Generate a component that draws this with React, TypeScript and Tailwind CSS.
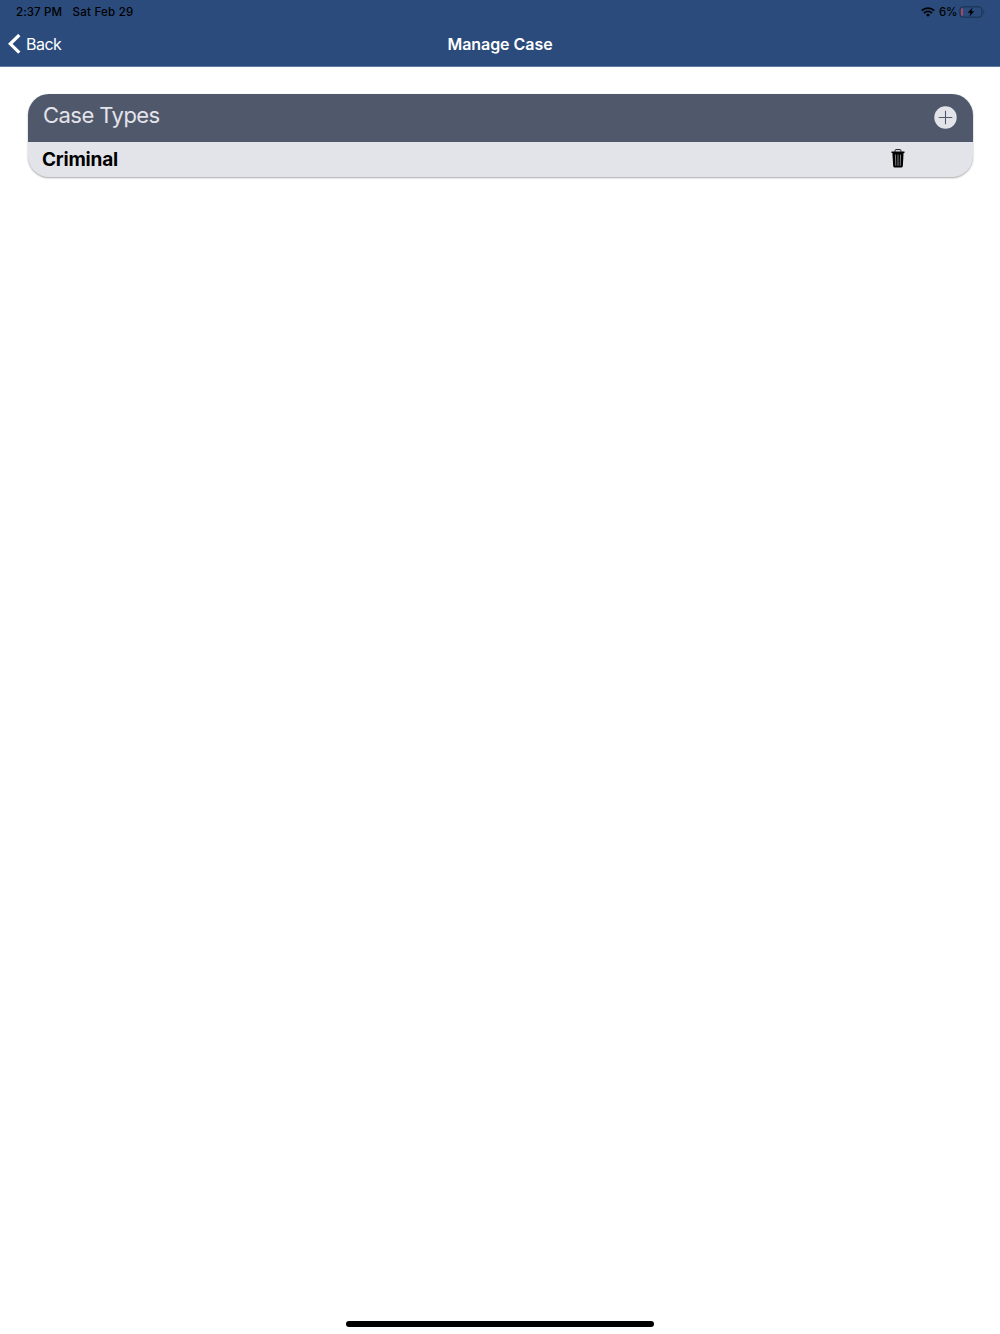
import React from "react";

const caseTypes = [{ id: 1, name: "Criminal" }];

const App: React.FC = () => {
  return (
    <div className="flex h-[1334px] w-[1000px] flex-col overflow-hidden bg-white font-['Inter',sans-serif]">
      <header className="h-[67px] border-b border-[#5f7ba3] bg-[#2a4b7c]">
        <StatusBar />
        <NavBar title="Manage Case" />
      </header>
      <main className="flex-1 px-[27.5px] pt-[27px]">
        <CaseTypes />
      </main>
      <div className="mx-auto mb-[7.5px] h-[5.5px] w-[308px] rounded-full bg-black" />
    </div>
  );
};

export default App;

const StatusBar = () => {
  return (
    <div className="flex h-6 items-center justify-between pl-4 pr-[15px] text-[11.5px] font-medium text-black">
      <div className="flex whitespace-pre pt-[2px]">
        <span className="w-[56.5px] tracking-[0.1px]">2:37 PM</span>
        <span className="tracking-[0.25px]">Sat Feb 29</span>
      </div>
      <div className="flex items-center">
        <WifiIcon />
        <span className="ml-[4px] w-[20px] pt-[2px] tracking-[-0.2px]">6%</span>
        <BatteryIcon />
      </div>
    </div>
  );
};

const NavBar = ({ title }: { title: string }) => {
  return (
    <div className="grid h-[42px] grid-cols-3 items-center text-white">
      <button className="flex items-center pb-[2px] pl-2 text-[16px] tracking-[-0.5px]">
        <svg className="mr-[5px] h-5 w-[13px]" viewBox="0 0 13 20" fill="none">
          <path d="M11.3 1 2.3 9.8l9 8.8" stroke="currentColor" strokeWidth="3.2" />
        </svg>
        Back
      </button>
      <h1 className="pb-[2px] text-center text-[16px] font-semibold tracking-[-0.05px]">{title}</h1>
    </div>
  );
};

const CaseTypes = () => {
  return (
    <section className="overflow-hidden rounded-[21px] bg-[#e3e4e9] shadow-[0_1px_2px_rgba(0,0,0,0.35)]">
      <div className="flex h-12 items-center justify-between bg-[#50586c] pl-[15.5px] pr-[15.5px] text-[#e3e4e9]">
        <h2 className="pb-[5px] text-[22px] font-normal tracking-[-0.55px]">Case Types</h2>
        <button aria-label="Add case type" className="pb-px">
          <PlusIcon />
        </button>
      </div>
      {caseTypes.map((item) => (
        <div key={item.id} className="flex h-[35px] items-center justify-between pl-[14.5px] pr-[67.5px]">
          <span className="pt-px text-[19px] font-bold tracking-[-0.2px] text-black">{item.name}</span>
          <button aria-label={`Delete ${item.name}`}>
            <TrashIcon />
          </button>
        </div>
      ))}
    </section>
  );
};

const WifiIcon = () => (
  <svg className="h-[10px] w-[14px]" viewBox="0 0 14 10" fill="none" stroke="black">
    <path d="M.8 3.6a8.9 8.9 0 0 1 12.4 0" strokeWidth="1.9" />
    <path d="M3 6.1a5.7 5.7 0 0 1 8 0" strokeWidth="1.8" />
    <path d="M7 9.8 4.9 7.7a3 3 0 0 1 4.2 0z" fill="black" stroke="none" />
  </svg>
);

const BatteryIcon = () => (
  <svg className="h-3 w-[26px]" viewBox="0 0 26 12" fill="none">
    <rect x=".9" y=".8" width="22" height="10.4" rx="3" stroke="#1b3050" />
    <path d="M24.3 4.2c1.4.5 1.4 3.1 0 3.6z" fill="#1b3050" />
    <path d="M3 2.6v6.8" stroke="#e5484f" strokeWidth="1.4" />
    <path d="m13.6 1.4-4.9 5.3h2.9l-1.3 4 5-5.4h-2.9z" fill="black" />
  </svg>
);

const PlusIcon = () => (
  <svg className="h-[23px] w-[23px]" viewBox="0 0 23 23">
    <circle cx="11.5" cy="11.5" r="11.2" fill="#e3e4e9" />
    <path d="M11.5 4.7v13.6M4.7 11.5h13.6" stroke="#50586c" strokeWidth="1.1" />
  </svg>
);

const TrashIcon = () => (
  <svg className="mb-[2px] h-[19px] w-[14px]" viewBox="0 0 14 19" fill="none">
    <path d="M4 2.8V1.6c0-.6.4-1 1-1h4c.6 0 1 .4 1 1v1.2" stroke="black" strokeWidth=".9" />
    <path d="M.5 2.4h13v1.5H.5z" fill="black" />
    <path d="M1.4 3.8h11.2l-.8 13.5c-.1.7-.5 1.1-1.1 1.1H3.3c-.6 0-1-.4-1.1-1.1z" fill="black" />
    <path d="m4.4 5.5.4 11.3M7 5.5v11.3M9.6 5.5l-.4 11.3" stroke="#a0a1a5" strokeWidth=".8" />
  </svg>
);
